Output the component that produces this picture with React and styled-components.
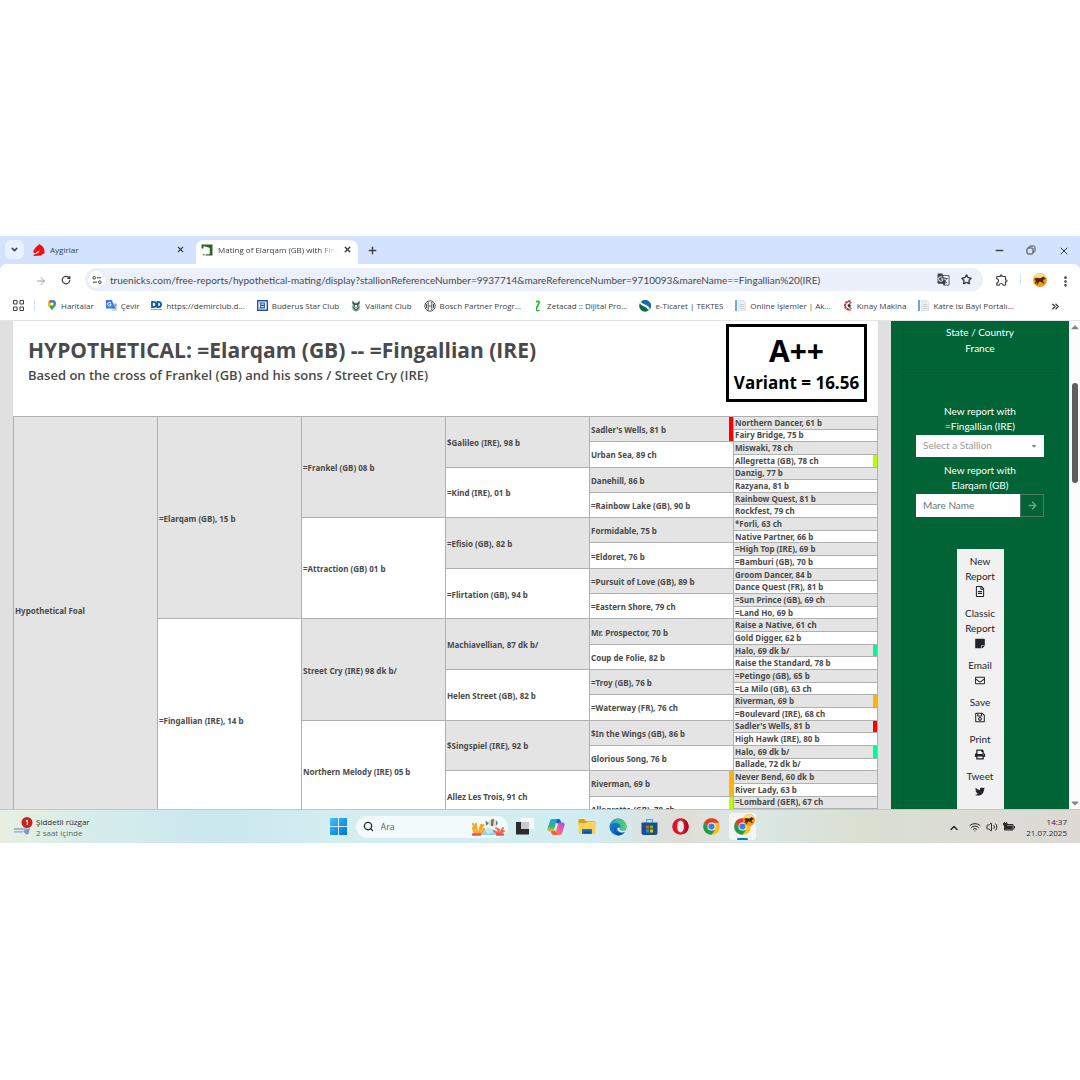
import React from "react";
import styled, { createGlobalStyle } from "styled-components";

// Icons
import {
  FaRegFileAlt,
  FaStickyNote,
  FaRegEnvelope,
  FaRegSave,
  FaPrint,
  FaTwitter,
  FaCaretDown,
  FaCaretUp,
} from "react-icons/fa";
import { MdGTranslate, MdOutlineExtension } from "react-icons/md";
import {
  ArrowRight,
  ChevronDown,
  ChevronUp,
  ChevronsRight,
  EllipsisVertical,
  Minus,
  Plus,
  RotateCw,
  Search,
  Star,
  Volume2,
  Wifi,
  X,
} from "lucide-react";

const colors = {
  frame: "#d3e2fd",
  omnibox: "#ebf0fa",
  ink: "#3c4043",
  green: "#006437",
  gutter: "#e0e0e0",
  cell: "#e4e4e4",
  line: "#b0b0b0",
  text: "#4a4a4a",
};

const GlobalStyle = createGlobalStyle`
  * { box-sizing: border-box; }
  body {
    margin: 0;
    background: #fff;
    font-family: "Open Sans", "Noto Sans", sans-serif;
  }
  button, input, select { font: inherit; margin: 0; }
  button { border: 0; padding: 0; background: none; color: inherit; }
  svg { display: block; flex: none; }
`;

const Desktop = styled.div`
  min-height: 100vh;
  display: flex;
  flex-direction: column;
  justify-content: center;
  padding-bottom: 1px;
`;
const Screen = styled.div`
  width: 100%;
  aspect-ratio: 1366 / 768;
  display: flex;
  flex-direction: column;
  overflow: hidden;
`;

// Browser frame
const TabStrip = styled.div`
  display: flex;
  align-items: center;
  height: 28px;
  padding: 0 12px 0 5px;
  background: ${colors.frame};
  color: ${colors.ink};
`;
const TabSearch = styled.button`
  display: grid;
  place-items: center;
  width: 19px;
  height: 19px;
  border-radius: 6px;
  background: #e9f0fe;
`;
const Tab = styled.div`
  display: flex;
  align-items: center;
  gap: 5px;
  align-self: flex-end;
  width: ${(props) => (props.$active ? 162 : 172)}px;
  height: 24px;
  padding: ${(props) => (props.$active ? "0 6px 4px 5px" : "0 11px 4px 9px")};
  border-radius: 8px 8px 0 0;
  background: ${(props) => (props.$active ? "#fff" : "transparent")};
  font-size: 8px;
`;
const TabTitle = styled.span`
  flex: 1;
  min-width: 0;
  overflow: hidden;
  white-space: nowrap;
  mask-image: ${(props) =>
    props.$fade ? "linear-gradient(90deg, #000 85%, transparent)" : "none"};
`;
const IconButton = styled.button`
  display: grid;
  place-items: center;
  width: ${(props) => props.$size || 10}px;
  height: ${(props) => props.$size || 10}px;
`;
const NewTab = styled(IconButton)`
  margin-left: 9px;
`;
const WindowControls = styled.div`
  display: flex;
  gap: 22px;
  margin-left: auto;
`;
const Toolbar = styled.div`
  height: 32px;
  background: ${colors.frame};
`;
const ToolbarInner = styled.div`
  display: flex;
  align-items: center;
  height: 32px;
  padding: 0 11px 0 35px;
  border-radius: 6px 6px 0 0;
  background: #fff;
  color: ${colors.ink};
`;
const ReloadButton = styled(IconButton)`
  margin: 0 6px 0 8px;
`;
const Omnibox = styled.div`
  flex: 1;
  display: flex;
  align-items: center;
  gap: 5px;
  height: 23px;
  padding: 0 11px 0 3px;
  border-radius: 12px;
  background: ${colors.omnibox};
`;
const SiteChip = styled.button`
  display: grid;
  place-items: center;
  width: 17px;
  height: 17px;
  border-radius: 50%;
  background: #fff;
`;
const Address = styled.input`
  flex: 1;
  min-width: 0;
  border: 0;
  padding: 0;
  background: transparent;
  color: #474a4d;
  font-family: Lato, sans-serif;
  font-size: 10px;
  outline: none;
`;
const OmniboxActions = styled.div`
  display: flex;
  gap: 10px;
`;
const ToolbarActions = styled.div`
  display: flex;
  align-items: center;
  gap: 12px;
  margin-left: 12px;
`;
const Separator = styled.span`
  width: 1px;
  height: 11px;
  background: ${colors.frame};
`;
const BookmarksBar = styled.nav`
  display: flex;
  align-items: center;
  height: 25px;
  padding: 0 20px 4px 12px;
  border-bottom: 1px solid #e3e3e3;
  color: ${colors.ink};
`;
const BookmarkList = styled.div`
  flex: 1;
  display: flex;
  justify-content: space-between;
  margin: 0 36px 0 10px;
`;
const Bookmark = styled.a`
  display: flex;
  align-items: center;
  gap: 4px;
  color: ${colors.ink};
  font-size: 8px;
  line-height: 12px;
  text-decoration: none;
  white-space: nowrap;
`;

// Page
const Viewport = styled.div`
  flex: 1;
  min-height: 0;
  display: flex;
  overflow: hidden;
  padding-left: 13px;
  background: ${colors.gutter};
`;
const Report = styled.main`
  flex: 1;
  background: #fff;
`;
const ReportHeader = styled.header`
  display: flex;
  justify-content: space-between;
  align-items: flex-start;
  height: 95px;
  padding: 3px 11px 0 15px;
`;
const Heading = styled.div`
  padding-top: 12px;
  color: ${colors.text};
`;
const Title = styled.h1`
  margin: 0;
  font-size: 21px;
  line-height: 28px;
  font-weight: 700;
`;
const Subtitle = styled.h2`
  margin: 0;
  font-size: 13px;
  line-height: 22px;
  font-weight: 600;
`;
const Score = styled.div`
  width: 141px;
  height: 78px;
  padding-top: 5px;
  border: 3px solid #000;
  color: #000;
  font-weight: 700;
  text-align: center;
  white-space: nowrap;
`;
const Grade = styled.div`
  font-size: 30px;
  line-height: 38px;
`;
const Variant = styled.div`
  font-size: 17px;
  line-height: 26px;
`;
const Pedigree = styled.table`
  width: 100%;
  height: 406px;
  table-layout: fixed;
  border-collapse: collapse;
`;
const Horse = styled.td`
  height: 12px;
  padding: ${(props) => (props.$leaf ? 0 : 2)}px 1px
    ${(props) => (props.$foal ? 18 : 0)}px;
  border: 1px solid ${colors.line};
  background: ${(props) => (props.$shaded ? colors.cell : "#fff")};
  box-shadow: ${(props) =>
    props.$mark ? `inset -4px 0 0 ${props.$mark}` : "none"};
  color: ${colors.text};
  font-family: "Noto Sans", sans-serif;
  font-size: 8px;
  line-height: 10px;
  font-weight: 700;
  white-space: nowrap;
  vertical-align: middle;
`;

const Sidebar = styled.aside`
  display: flex;
  flex-direction: column;
  gap: 5px;
  width: 178px;
  margin-left: 13px;
  padding: 0 11px;
  background: ${colors.green};
  color: #fff;
  font-family: Lato, sans-serif;
  font-size: 10px;
  line-height: 15px;
  text-align: center;
`;
const Panel = styled.section`
  padding: ${(props) => (props.$first ? "3px 13px 13px" : "28px 13px 0")};
  border: 1px solid #005c33;
  border-top-width: ${(props) => (props.$first ? 0 : 1)}px;
`;
const Country = styled.p`
  margin: 0;
  line-height: 16px;
`;
const Field = styled.div`
  margin-bottom: 6px;
`;
const FieldLabel = styled.label`
  display: block;
  margin-bottom: 1px;
`;
const SelectBox = styled.div`
  display: flex;
  align-items: center;
  padding-right: 6px;
  background: #fff;
  color: #888;
`;
const StallionSelect = styled.select`
  flex: 1;
  min-width: 0;
  height: 22px;
  padding: 0 7px;
  border: 0;
  appearance: none;
  background: transparent;
  color: #999;
`;
const MareSearch = styled.div`
  display: flex;
  height: 23px;
`;
const MareInput = styled.input`
  flex: 1;
  min-width: 0;
  padding: 0 7px;
  border: 0;
  background: #fff;
  &::placeholder {
    color: #6c757d;
    opacity: 1;
  }
`;
const MareSubmit = styled.button`
  display: grid;
  place-items: center;
  width: 24px;
  border: 1px solid #4c7a63;
  color: #7c9a8b;
`;
const Actions = styled.div`
  display: flex;
  flex-direction: column;
  gap: 7px;
  width: 47px;
  height: 300px;
  margin: 32px auto 0;
  padding-top: 5px;
  background: #f1f1f1;
`;
const Action = styled.button`
  color: #212529;
  line-height: 15px;
  svg {
    height: 15px;
    margin: 0 auto;
    padding: 2px 0;
  }
`;
const Scrollbar = styled.div`
  display: flex;
  flex-direction: column;
  align-items: center;
  justify-content: space-between;
  width: 11px;
  background: #fcfcfc;
  color: #858585;
`;
const ScrollTrack = styled.div`
  flex: 1;
  padding-top: 50px;
`;
const ScrollThumb = styled.div`
  width: 6px;
  height: 100px;
  border-radius: 3px;
  background: #5f5f5f;
`;

// Taskbar
const Taskbar = styled.footer`
  display: grid;
  grid-template-columns: 1fr auto 1fr;
  align-items: center;
  height: 34px;
  padding: 0 13px;
  border-top: 1px solid #bccbc9;
  background: linear-gradient(
    90deg,
    #e8efe1,
    #d6edea 8%,
    #cbe8ef 20%,
    #d4eef0 32%,
    #d2edf1 55%,
    #dfddd7 63%,
    #dbe8e6 69%,
    #dadfd2 80%,
    #ddd9d5
  );
  color: #2b2b2b;
`;
const Weather = styled.button`
  display: flex;
  align-items: center;
  gap: 3px;
  font-size: 8px;
  line-height: 11px;
  text-align: left;
`;
const Muted = styled.div`
  color: #5f6668;
`;
const Dock = styled.div`
  display: flex;
  align-items: center;
  gap: 4px;
`;
const DockItem = styled.button`
  display: flex;
  flex-direction: column;
  align-items: center;
  justify-content: center;
  position: relative;
  width: 27px;
  height: 27px;
  border-radius: 3px;
  background: ${(props) => (props.$active ? "#ffffff99" : "none")};
`;
const ActiveLine = styled.span`
  position: absolute;
  bottom: 0;
  width: 11px;
  height: 2px;
  border-radius: 1px;
  background: #0078d4;
`;
const SearchBox = styled.label`
  display: flex;
  align-items: center;
  gap: 7px;
  width: 152px;
  height: 22px;
  padding: 0 3px 0 7px;
  border-radius: 11px;
  background: #f3fafb;
`;
const SearchInput = styled.input`
  flex: 1;
  min-width: 0;
  padding: 0;
  border: 0;
  background: transparent;
  font-size: 9px;
  &::placeholder {
    color: #5b5f61;
    opacity: 1;
  }
`;
const Tray = styled.div`
  display: flex;
  align-items: center;
  justify-content: flex-end;
  gap: 5px;
`;
const TrayToggle = styled(IconButton)`
  margin-right: 6px;
`;
const Clock = styled.time`
  margin-left: 6px;
  font-size: 8px;
  line-height: 11px;
  text-align: right;
`;

// Small drawings
const HorseHead = () => (
  <svg width="12" height="12" viewBox="0 0 12 12">
    <path
      fill="#f60d0d"
      d="M6.500 0L8 1.200c2.200 1 3.500 3.300 3.500 6.800v1.500l-2 .5-1 1.500L1 12 .2 11l5-2L7 6.500 4 7.500 2 9.500.3 8.500.5 6.500 3 3z"
    />
  </svg>
);
const TrueNicks = () => (
  <svg width="12" height="12" viewBox="0 0 12 12">
    <path fill="#2f6422" d="M.5.500h11v11H4.500V10.500L8.500 10V4L2.500 2.200V4.500h-2z" />
    <path fill="#fff" d="M2.500 2.200l6 1.800v6l-1.500.2V5.500z" />
    <path fill="#2f6422" d="M1 11l2.500-1.200v1.700z" />
  </svg>
);
const Restore = () => (
  <svg width="10" height="10" viewBox="0 0 10 10" fill="none" stroke="#3c4043">
    <rect x="1" y="3" width="6" height="6" rx="1" />
    <path d="M3 3V2.500C3 1.500 3.500 1 4.500 1h3C8.500 1 9 1.500 9 2.500v3c0 1-.5 1.500-1.500 1.500H7" />
  </svg>
);
const SiteSettings = () => (
  <svg width="10" height="10" viewBox="0 0 10 10" fill="none" stroke="#3c4043">
    <circle cx="2.200" cy="2.800" r="1.300" />
    <circle cx="7.800" cy="7.200" r="1.300" />
    <path d="M5 2.800h4M1 7.200h4" />
  </svg>
);
const AppsGrid = () => (
  <svg width="11" height="11" viewBox="0 0 11 11" fill="none" stroke="#3c4043">
    <path d="M.5.500h3.500v3.500H.5zM7 .5h3.500v3.500H7zM.5 7h3.500v3.500H.5zM7 7h3.500v3.500H7z" />
  </svg>
);
const Pin = () => (
  <svg width="10" height="11" viewBox="0 0 10 11">
    <path fill="#34a853" d="M5 11C4.500 8 1 7 1 4a4 4 0 0 1 8 0c0 3-3.500 4-4 7z" />
    <path fill="#4285f4" d="M5 0a4 4 0 0 1 4 4L5 4z" />
    <path fill="#ea4335" d="M5 0v4L2 1.400A4 4 0 0 1 5 0z" />
    <path fill="#fbbc04" d="M2 1.400L5 4 2.200 7.200C1.500 6.300 1 5.200 1 4s.4-2 1-2.600z" />
    <circle cx="5" cy="4" r="1.500" fill="#fff" />
  </svg>
);
const Translate = () => (
  <svg width="11" height="11" viewBox="0 0 11 11">
    <path fill="#d3d9e2" d="M4 3h7v8H6z" />
    <path fill="#3f7ee8" d="M0 0h6l3 8.500H0z" />
    <path stroke="#fff" fill="none" d="M5 3.200A1.800 1.800 0 1 0 5 5.200V4.300H3.500" />
    <path stroke="#5578a8" strokeWidth=".7" fill="none" d="M7 5h3.500M9.800 5c-.3 2-1.500 3-2.500 3.700M7.500 6l2.500 3" />
  </svg>
);
const Demir = () => (
  <svg width="11" height="11" viewBox="0 0 11 11">
    <path fill="none" stroke="#125fa9" strokeWidth="1.800" d="M1 1.800h1.500a2.600 2.600 0 0 1 0 5.200H1zM6.500 1.800H7.500a2.600 2.600 0 0 1 0 5.200H6.500z" />
    <path stroke="#7fa5cc" d="M0 9.500h11" />
  </svg>
);
const Buderus = () => (
  <svg width="11" height="11" viewBox="0 0 11 11" fill="none" stroke="#1f549b">
    <path d="M.7.700h9.600v9.600H.7z" strokeWidth="1.400" />
    <path d="M2.500 3h4.800v4.800H2.500M3.800 3v4.800M4 5.400h3.500" strokeWidth="1.200" />
  </svg>
);
const Vaillant = () => (
  <svg width="10" height="12" viewBox="0 0 10 12">
    <ellipse cx="5" cy="7" rx="4.300" ry="4.700" fill="#8ecabd" />
    <path fill="#3d4f4b" d="M1.500.5l2.500 3h2l2.500-3 .2 3L7 5l1 3-3 3-3-3 1-3-1.700-1.500z" />
    <path fill="#fff" d="M4 5h2l.5 2.500L5 9.500 3.500 7.500z" />
    <path fill="#3d4f4b" d="M4.500 6.500h1V8h-1z" />
  </svg>
);
const Bosch = () => (
  <svg width="12" height="12" viewBox="0 0 12 12" fill="none" stroke="#4f5356">
    <circle cx="6" cy="6" r="5.200" />
    <path d="M4.200 2v8M7.800 2v8M4.200 6h3.600M2.500 3.800v4.400M9.500 3.800v4.400" />
  </svg>
);
const Zetacad = () => (
  <svg width="10" height="12" viewBox="0 0 10 12" fill="none">
    <path stroke="#35c63c" strokeWidth="2" d="M3 2c3-1.500 4 0 2.500 2L4 7" />
    <path stroke="#2ba84a" strokeWidth="1.500" d="M4 6.500L3.500 9.500c0 1.500 1.500 1.500 3 .5" />
  </svg>
);
const Tektes = () => (
  <svg width="12" height="12" viewBox="0 0 12 12">
    <circle cx="6" cy="6" r="5.800" fill="#0b6b48" />
    <path fill="#1c69ad" d="M2.500 1.300A5.800 5.800 0 0 1 11 9z" />
    <path stroke="#fff" strokeWidth="2" d="M1.500 2.500c1 3.500 7 2 8.500 7" fill="none" />
  </svg>
);
const Sheet = () => (
  <svg width="11" height="11" viewBox="0 0 11 11">
    <path fill="#6da9d6" d="M0 0h2v11H0z" />
    <path fill="#eceff2" stroke="#cfd5db" strokeWidth=".6" d="M3.500.300h5l2.200 2.200v8.200H3.500z" />
    <path stroke="#c2cad1" strokeWidth=".8" d="M5 4.500h4M4.500 6.500h5M5 8.500h4" />
  </svg>
);
const Kinay = () => (
  <svg width="10" height="11" viewBox="0 0 10 11" fill="none">
    <path stroke="#d3262c" strokeWidth="2" strokeDasharray="2.400 .4" d="M7.500 1.500A4.200 4.200 0 1 0 7.500 9.500" />
    <circle cx="6.200" cy="5.500" r="1.600" fill="#3a2a2a" />
    <path stroke="#3a2a2a" d="M6.500 3.500l2-1M6.500 7.500l2 1" />
  </svg>
);
const Avatar = ({ size }) => (
  <svg width={size} height={size} viewBox="0 0 14 14">
    <circle cx="7" cy="7" r="7" fill="#f59b1c" />
    <path fill="#fbdc8f" d="M.6 4.500a7 7 0 0 1 12.800 0z" />
    <path
      fill="#4a2718"
      d="M1.500 6.500C2.500 4.500 4 5 5 5.200h3L10 3.500l2.500 1.800-.5 1.200-1.500-.2-.5 2 1.500 2-.8.500L8.500 9 6 8.800 4.500 11.500h-1L4 9 2.500 10.800l-.8-.5L3 8z"
    />
  </svg>
);
const Wind = () => (
  <svg width="20" height="20" viewBox="0 0 20 20" fill="none">
    <path stroke="#8aa5d3" strokeWidth="1.300" d="M1 12h13M1 14.800h9" />
    <path fill="#7896c8" d="M10 14l7-3-1.500 6-2.500.5z" />
    <circle cx="14" cy="5.500" r="5.500" fill="#c4261d" />
    <path stroke="#fff" d="M12.800 4.200l1.500-1V8" />
  </svg>
);
const Windows = () => (
  <svg width="17" height="17" viewBox="0 0 17 17">
    <defs>
      <linearGradient id="win" x1="0" y1="0" x2="1" y2="1">
        <stop stopColor="#3fc4fa" />
        <stop offset="1" stopColor="#0071d0" />
      </linearGradient>
    </defs>
    <path fill="url(#win)" d="M0 0h8v8H0zM9 0h8v8H9zM0 9h8v8H0zM9 9h8v8H9z" />
  </svg>
);
const Reef = () => (
  <svg width="34" height="18" viewBox="0 0 34 18" fill="none" strokeLinecap="round">
    <path fill="#8ed1f0" d="M8 17c3-7 17-9 21 0z" />
    <path fill="#bfe8f7" d="M13 12c3-4 8-2 10 2l-6 2z" />
    <path stroke="#f5a623" strokeWidth="2.200" d="M4 16L2 10M6 15L5 6M8 15l2-8M10 15l3-4M2 6l2 4M12 7l-2 4" />
    <path stroke="#f0694b" strokeWidth="2" d="M28 16l-1-5M29 15l3-5M26 15l-3-2M28 12l-3-2M31 14l2-1" />
    <path stroke="#e64f6e" strokeWidth="2.500" d="M2 16.500h7M26 16.500h6" />
    <ellipse cx="22" cy="5" rx="4.500" ry="3.500" fill="#f0dfa2" />
    <path fill="#5b7794" d="M18 5l-3.500-2 .5 5zM20 1.800L23 .5l-1 7.800-2-.3zM25 2.500l1.500 1.500v2L25 7.500z" />
  </svg>
);
const TaskView = () => (
  <svg width="18" height="17" viewBox="0 0 18 17">
    <path fill="#2b2b2b" d="M0 4h13v12.500H0z" />
    <path fill="#f8f8f8" d="M12.500 0H18v11h-5.500z" />
    <path fill="#c9c9c9" d="M5 4h8v7H5z" />
    <path fill="#f8f8f8" d="M5 0h8v4H5z" />
  </svg>
);
const Copilot = () => (
  <svg width="18" height="18" viewBox="0 0 18 18">
    <defs>
      <linearGradient id="copA" x1="0" y1="0" x2="0" y2="1">
        <stop stopColor="#1fa3ea" />
        <stop offset=".6" stopColor="#36b37a" />
        <stop offset="1" stopColor="#f4c430" />
      </linearGradient>
      <linearGradient id="copB" x1="1" y1="0" x2="0" y2="1">
        <stop stopColor="#8a5cf0" />
        <stop offset=".5" stopColor="#f0569d" />
        <stop offset="1" stopColor="#fb8a3c" />
      </linearGradient>
    </defs>
    <path fill="#1558c8" d="M7 1h4.500c1.500 0 2 1 2.500 3l.5 1.500H10z" />
    <path fill="url(#copA)" d="M5 1h5L7 12c-.4 1-1 1.500-2 1.500H2.500C.5 13.500 0 12 .5 10.500L3 3c.4-1.300 1-2 2-2z" />
    <path fill="url(#copB)" d="M13 4.500h2.500c2 0 2.500 1.500 2 3L15 15c-.4 1.300-1 2-2 2H8l3-11c.4-1 1-1.500 2-1.500z" />
    <path fill="#f2643d" d="M11 17H6.500C5 17 4.500 16 4 14l-.3-.8L8 12.500z" />
  </svg>
);
const Explorer = () => (
  <svg width="18" height="17" viewBox="0 0 18 17">
    <path fill="#e59a12" d="M.5 2c0-.6.4-1 1-1H6l2 2h8.500c.6 0 1 .4 1 1v3H.5z" />
    <path fill="#ffd157" d="M.5 5H8l1.500-1.500h8V15c0 .6-.4 1-1 1h-15c-.6 0-1-.4-1-1z" />
    <path fill="#1374c9" d="M4 12c0-.6.4-1 1-1h8c.6 0 1 .4 1 1v4H4z" />
    <path fill="#0b4f93" d="M5.500 13.500h7V15h-7z" />
  </svg>
);
const Edge = () => (
  <svg width="18" height="18" viewBox="0 0 18 18">
    <defs>
      <linearGradient id="edgeA">
        <stop stopColor="#1b9de2" />
        <stop offset="1" stopColor="#5fd35c" />
      </linearGradient>
    </defs>
    <circle cx="9" cy="9" r="8.500" fill="#1373c8" />
    <path fill="url(#edgeA)" d="M.6 8A8.500 8.500 0 0 1 17.500 8.500c0 2.500-1.800 4-4 4-1.800 0-3-.6-3-1.300 0-.5 1-.8 1-2.400C11.500 6.500 9 5 6.500 5 3 5 1 7 .6 8z" />
    <path fill="#0d4f9e" d="M6.500 8.500c-1.200 3 1 6.500 5 6.500 2 0 3.500-.7 4.500-1.500-1.500 2.600-4 4-7 4-3-1-5.500-6-2.500-9z" />
    <path fill="#d8eef2" d="M11.300 9.500c-.2.900-.8 1.200-.8 1.800 0 .8 1.200 1.400 3 1.400 1.400 0 2.800-.5 3.500-1.600l-.8 2.500c-3 2-8.500.4-7.700-3.600z" />
  </svg>
);
const Store = () => (
  <svg width="17" height="18" viewBox="0 0 17 18">
    <path fill="none" stroke="#35b8f1" strokeWidth="1.300" d="M5.500 5V1.700h6V5" />
    <path fill="#1d4f87" d="M.5 4.500h16V15c0 1.300-1 2-2 2h-12c-1.200 0-2-.8-2-2z" />
    <path fill="#f25022" d="M5 7.500h3v3H5z" />
    <path fill="#7fba00" d="M9 7.500h3v3H9z" />
    <path fill="#00a4ef" d="M5 11.500h3v3H5z" />
    <path fill="#ffb900" d="M9 11.500h3v3H9z" />
  </svg>
);
const Opera = () => (
  <svg width="17" height="17" viewBox="0 0 17 17">
    <circle cx="8.500" cy="8.500" r="8.300" fill="#e3122b" />
    <path fill="#a80f22" d="M11 .7a8.300 8.300 0 0 1 0 15.600c3-2 3-13 0-15.600z" />
    <ellipse cx="8.500" cy="8.500" rx="3.400" ry="6" fill="#e3e8e6" />
  </svg>
);
const Chrome = () => (
  <svg width="17" height="17" viewBox="0 0 18 18">
    <circle cx="9" cy="9" r="8.800" fill="#fbc116" />
    <path fill="#e33b2e" d="M1.400 4.600a8.800 8.800 0 0 1 15.200 0L16.800 5H9L5.500 11z" />
    <path fill="#1e9e4a" d="M1.400 4.600L5.500 11 9 13h3.500L9 17.800A8.800 8.800 0 0 1 1.400 4.600z" />
    <circle cx="9" cy="9" r="4.200" fill="#fff" />
    <circle cx="9" cy="9" r="3.300" fill="#3f7de8" />
  </svg>
);
const ProfileBadge = styled.span`
  position: absolute;
  top: 1px;
  right: 1px;
`;
const Battery = () => (
  <svg width="12" height="9" viewBox="0 0 12 9">
    <path fill="none" stroke="#2b2b2b" d="M3 2.500h7V8H1.500V4" />
    <path fill="#2b2b2b" d="M3 3.500h6.500v4H2V4zM10.500 4H12v2.500h-1.500zM0 1h1V0h1v1h1V0h1v1h.5v2L3 4H1.500L0 3z" />
  </svg>
);

const bookmarks = [
  { label: "Haritalar", icon: Pin },
  { label: "Çevir", icon: Translate },
  { label: "https://demirclub.d...", icon: Demir },
  { label: "Buderus Star Club", icon: Buderus },
  { label: "Vaillant Club", icon: Vaillant },
  { label: "Bosch Partner Progr...", icon: Bosch },
  { label: "Zetacad :: Dijital Pro...", icon: Zetacad },
  { label: "e-Ticaret | TEKTES", icon: Tektes },
  { label: "Online İşlemler | Ak...", icon: Sheet },
  { label: "Kınay Makina", icon: Kinay },
  { label: "Katre Isı Bayi Portalı...", icon: Sheet },
];

const RED = "#ff0000";
const LIME = "#b6ff00";
const MINT = "#00fa9a";
const ORANGE = "#ffb400";

// One array per generation, top of the tree first
const generations = [
  ["Hypothetical Foal"],
  ["=Elarqam (GB), 15 b", "=Fingallian (IRE), 14 b"],
  [
    "=Frankel (GB) 08 b",
    "=Attraction (GB) 01 b",
    "Street Cry (IRE) 98 dk b/",
    "Northern Melody (IRE) 05 b",
  ],
  [
    "$Galileo (IRE), 98 b",
    "=Kind (IRE), 01 b",
    "=Efisio (GB), 82 b",
    "=Flirtation (GB), 94 b",
    "Machiavellian, 87 dk b/",
    "Helen Street (GB), 82 b",
    "$Singspiel (IRE), 92 b",
    "Allez Les Trois, 91 ch",
  ],
  [
    ["Sadler's Wells, 81 b", RED],
    "Urban Sea, 89 ch",
    "Danehill, 86 b",
    "=Rainbow Lake (GB), 90 b",
    "Formidable, 75 b",
    "=Eldoret, 76 b",
    "=Pursuit of Love (GB), 89 b",
    "=Eastern Shore, 79 ch",
    "Mr. Prospector, 70 b",
    "Coup de Folie, 82 b",
    "=Troy (GB), 76 b",
    "=Waterway (FR), 76 ch",
    "$In the Wings (GB), 86 b",
    "Glorious Song, 76 b",
    ["Riverman, 69 b", ORANGE],
    ["Allegretta (GB), 78 ch", LIME],
  ],
  [
    "Northern Dancer, 61 b",
    "Fairy Bridge, 75 b",
    "Miswaki, 78 ch",
    ["Allegretta (GB), 78 ch", LIME],
    "Danzig, 77 b",
    "Razyana, 81 b",
    "Rainbow Quest, 81 b",
    "Rockfest, 79 ch",
    "*Forli, 63 ch",
    "Native Partner, 66 b",
    "=High Top (IRE), 69 b",
    "=Bamburi (GB), 70 b",
    "Groom Dancer, 84 b",
    "Dance Quest (FR), 81 b",
    "=Sun Prince (GB), 69 ch",
    "=Land Ho, 69 b",
    "Raise a Native, 61 ch",
    "Gold Digger, 62 b",
    ["Halo, 69 dk b/", MINT],
    "Raise the Standard, 78 b",
    "=Petingo (GB), 65 b",
    "=La Milo (GB), 63 ch",
    ["Riverman, 69 b", ORANGE],
    "=Boulevard (IRE), 68 ch",
    ["Sadler's Wells, 81 b", RED],
    "High Hawk (IRE), 80 b",
    ["Halo, 69 dk b/", MINT],
    "Ballade, 72 dk b/",
    "Never Bend, 60 dk b",
    "River Lady, 63 b",
    "=Lombard (GER), 67 ch",
    "",
  ],
];

const actions = [
  { label: ["New", "Report"], icon: FaRegFileAlt },
  { label: ["Classic", "Report"], icon: FaStickyNote },
  { label: ["Email"], icon: FaRegEnvelope },
  { label: ["Save"], icon: FaRegSave },
  { label: ["Print"], icon: FaPrint },
  { label: ["Tweet"], icon: FaTwitter },
];

function Browser() {
  return (
    <>
      <TabStrip>
        <TabSearch aria-label="Search tabs">
          <ChevronDown size={9} strokeWidth={4} />
        </TabSearch>
        <Tab>
          <HorseHead />
          <TabTitle>Aygirlar</TabTitle>
          <IconButton aria-label="Close tab">
            <X size={9} strokeWidth={3} />
          </IconButton>
        </Tab>
        <Tab $active>
          <TrueNicks />
          <TabTitle $fade>Mating of Elarqam (GB) with Fingallian</TabTitle>
          <IconButton aria-label="Close tab">
            <X size={9} strokeWidth={4} />
          </IconButton>
        </Tab>
        <NewTab aria-label="New tab">
          <Plus size={11} strokeWidth={3} />
        </NewTab>
        <WindowControls>
          <IconButton aria-label="Minimize">
            <Minus size={11} strokeWidth={3} />
          </IconButton>
          <IconButton aria-label="Restore">
            <Restore />
          </IconButton>
          <IconButton aria-label="Close">
            <X size={12} strokeWidth={2} />
          </IconButton>
        </WindowControls>
      </TabStrip>
      <Toolbar>
        <ToolbarInner>
          <IconButton aria-label="Forward">
            <ArrowRight size={12} color="#9aa0a6" />
          </IconButton>
          <ReloadButton aria-label="Reload" $size={26}>
            <RotateCw size={10} strokeWidth={3} />
          </ReloadButton>
          <Omnibox>
            <SiteChip aria-label="Site information">
              <SiteSettings />
            </SiteChip>
            <Address
              aria-label="Address"
              defaultValue="truenicks.com/free-reports/hypothetical-mating/display?stallionReferenceNumber=9937714&mareReferenceNumber=9710093&mareName==Fingallian%20(IRE)"
            />
            <OmniboxActions>
              <IconButton aria-label="Translate" $size={13}>
                <MdGTranslate size={13} />
              </IconButton>
              <IconButton aria-label="Bookmark" $size={12}>
                <Star size={11} strokeWidth={3} />
              </IconButton>
            </OmniboxActions>
          </Omnibox>
          <ToolbarActions>
            <IconButton aria-label="Extensions" $size={13}>
              <MdOutlineExtension size={14} />
            </IconButton>
            <Separator />
            <IconButton aria-label="Profile" $size={14}>
              <Avatar size={14} />
            </IconButton>
            <IconButton aria-label="Menu">
              <EllipsisVertical size={13} strokeWidth={3} />
            </IconButton>
          </ToolbarActions>
        </ToolbarInner>
      </Toolbar>
      <BookmarksBar>
        <IconButton aria-label="Apps" $size={12}>
          <AppsGrid />
        </IconButton>
        <BookmarkList>
          <Separator />
          {bookmarks.map(({ label, icon: Icon }) => (
            <Bookmark href="#" key={label}>
              <Icon />
              {label}
            </Bookmark>
          ))}
        </BookmarkList>
        <IconButton aria-label="More bookmarks">
          <ChevronsRight size={11} strokeWidth={3} />
        </IconButton>
      </BookmarksBar>
    </>
  );
}

function PedigreeTable() {
  const rows = generations[generations.length - 1].length;

  return (
    <Pedigree>
      <tbody>
        {Array.from({ length: rows }, (_, row) => (
          <tr key={row}>
            {generations.map((horses, gen) => {
              const span = rows / horses.length;
              if (row % span !== 0) return null;
              const index = row / span;
              const [name, mark] = [].concat(horses[index]);
              return (
                <Horse
                  key={gen}
                  rowSpan={span}
                  $shaded={index % 2 === 0}
                  $mark={mark}
                  $foal={gen === 0}
                  $leaf={span === 1}
                >
                  {name}
                </Horse>
              );
            })}
          </tr>
        ))}
      </tbody>
    </Pedigree>
  );
}

function ReportSidebar() {
  return (
    <Sidebar>
      <Panel $first>
        <Country>State / Country</Country>
        <Country>France</Country>
      </Panel>
      <Panel>
        <Field>
          <FieldLabel htmlFor="stallion">
            New report with
            <br />
            =Fingallian (IRE)
          </FieldLabel>
          <SelectBox>
            <StallionSelect id="stallion">
              <option>Select a Stallion</option>
            </StallionSelect>
            <FaCaretDown size={8} />
          </SelectBox>
        </Field>
        <Field>
          <FieldLabel htmlFor="mare">
            New report with
            <br />
            Elarqam (GB)
          </FieldLabel>
          <MareSearch>
            <MareInput id="mare" placeholder="Mare Name" />
            <MareSubmit aria-label="Create report">
              <ArrowRight size={11} strokeWidth={3} />
            </MareSubmit>
          </MareSearch>
        </Field>
        <Actions>
          {actions.map(({ label, icon: Icon }) => (
            <Action key={label.join(" ")}>
              {label.map((line) => (
                <div key={line}>{line}</div>
              ))}
              <Icon />
            </Action>
          ))}
        </Actions>
      </Panel>
    </Sidebar>
  );
}

function WindowsTaskbar() {
  return (
    <Taskbar>
      <Weather>
        <Wind />
        <div>
          <div>Şiddetli rüzgar</div>
          <Muted>2 saat içinde</Muted>
        </div>
      </Weather>
      <Dock>
        <DockItem aria-label="Start">
          <Windows />
        </DockItem>
        <SearchBox>
          <Search size={11} strokeWidth={3} />
          <SearchInput aria-label="Ara" placeholder="Ara" />
          <Reef />
        </SearchBox>
        <DockItem aria-label="Task view">
          <TaskView />
        </DockItem>
        <DockItem aria-label="Copilot">
          <Copilot />
        </DockItem>
        <DockItem aria-label="Explorer">
          <Explorer />
        </DockItem>
        <DockItem aria-label="Edge">
          <Edge />
        </DockItem>
        <DockItem aria-label="Store">
          <Store />
        </DockItem>
        <DockItem aria-label="Opera">
          <Opera />
        </DockItem>
        <DockItem aria-label="Chrome">
          <Chrome />
        </DockItem>
        <DockItem aria-label="Chrome profile" $active>
          <Chrome />
          <ProfileBadge>
            <Avatar size={12} />
          </ProfileBadge>
          <ActiveLine />
        </DockItem>
      </Dock>
      <Tray>
        <TrayToggle aria-label="Hidden icons">
          <ChevronUp size={12} strokeWidth={3} />
        </TrayToggle>
        <Wifi size={12} />
        <Volume2 size={12} />
        <Battery />
        <Clock>
          14:37
          <br />
          21.07.2025
        </Clock>
      </Tray>
    </Taskbar>
  );
}

function App() {
  return (
    <Desktop>
      <GlobalStyle />
      <Screen>
        <Browser />
        <Viewport>
          <Report>
            <ReportHeader>
              <Heading>
                <Title>HYPOTHETICAL: =Elarqam (GB) -- =Fingallian (IRE)</Title>
                <Subtitle>
                  Based on the cross of Frankel (GB) and his sons / Street Cry
                  (IRE)
                </Subtitle>
              </Heading>
              <Score>
                <Grade>A++</Grade>
                <Variant>Variant = 16.56</Variant>
              </Score>
            </ReportHeader>
            <PedigreeTable />
          </Report>
          <ReportSidebar />
          <Scrollbar>
            <FaCaretUp size={12} />
            <ScrollTrack>
              <ScrollThumb />
            </ScrollTrack>
            <FaCaretDown size={12} />
          </Scrollbar>
        </Viewport>
        <WindowsTaskbar />
      </Screen>
    </Desktop>
  );
}

export default App;
